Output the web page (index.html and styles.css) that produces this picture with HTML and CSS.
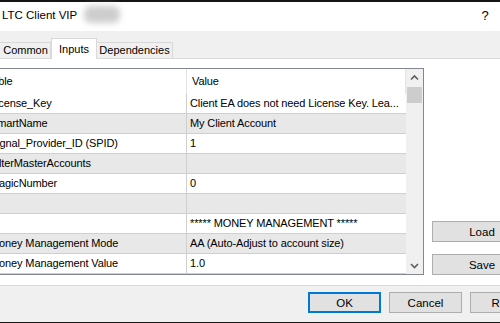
FILE: index.html
```html
<!DOCTYPE html>
<html>
<head>
<meta charset="utf-8">
<title>LTC Client VIP</title>
<link rel="stylesheet" href="styles.css">
</head>
<body>
<div class="topline"></div>
<header class="titlebar">
  <span class="title">LTC Client VIP</span>
  <span class="blurred"></span>
  <span class="spacer"></span>
  <span class="help">?</span>
  <span class="close"></span>
</header>
<main class="dialog">
  <nav class="tabs">
    <div class="tab tab-common">Common</div>
    <div class="tab tab-inputs active">Inputs</div>
    <div class="tab tab-deps">Dependencies</div>
  </nav>
  <section class="panel">
    <div class="grid">
      <div class="list">
        <div class="row head">
          <div class="cell name">Variable</div>
          <div class="cell value">Value</div>
        </div>
        <div class="row"><div class="cell name">License_Key</div><div class="cell value">Client EA does not need License Key. Lea...</div></div>
        <div class="row alt"><div class="cell name">SmartName</div><div class="cell value">My Client Account</div></div>
        <div class="row"><div class="cell name">Signal_Provider_ID (SPID)</div><div class="cell value">1</div></div>
        <div class="row alt"><div class="cell name">FilterMasterAccounts</div><div class="cell value"></div></div>
        <div class="row"><div class="cell name">MagicNumber</div><div class="cell value">0</div></div>
        <div class="row alt"><div class="cell name"></div><div class="cell value"></div></div>
        <div class="row"><div class="cell name"></div><div class="cell value">***** MONEY MANAGEMENT *****</div></div>
        <div class="row alt"><div class="cell name">Money Management Mode</div><div class="cell value">AA (Auto-Adjust to account size)</div></div>
        <div class="row"><div class="cell name">Money Management Value</div><div class="cell value">1.0</div></div>
      </div>
      <div class="scroll">
        <div class="arrow">
          <svg width="17" height="17" viewBox="0 0 17 17"><polyline points="5,10.5 8.5,7 12,10.5" fill="none" stroke="#606060" stroke-width="1.7"/></svg>
        </div>
        <div class="thumb"></div>
        <div class="track"></div>
        <div class="arrow">
          <svg width="17" height="17" viewBox="0 0 17 17"><polyline points="5,7 8.5,10.5 12,7" fill="none" stroke="#606060" stroke-width="1.7"/></svg>
        </div>
      </div>
    </div>
    <div class="side">
      <button class="btn wide">Load</button>
      <button class="btn wide">Save</button>
    </div>
  </section>
  <footer class="footer">
    <button class="btn primary">OK</button>
    <button class="btn">Cancel</button>
    <button class="btn">Reset</button>
  </footer>
</main>
<div class="bottomline"></div>
</body>
</html>
```

FILE: styles.css
```css
* { box-sizing: border-box; }
html, body { margin: 0; padding: 0; }
body {
  width: 500px;
  height: 323px;
  overflow: hidden;
  background: #f0f0f0;
  font-family: "Liberation Sans", Arial, sans-serif;
  font-size: 11px;
  color: #000;
}
.topline { height: 2px; background: #151515; }
.titlebar {
  width: 560px;
  height: 29px;
  background: #fff;
  display: flex;
  align-items: center;
  padding-right: 6px;
}
.title { padding-left: 2px; font-size: 11.5px; margin-top: -3px; }
.blurred {
  width: 36px;
  height: 17px;
  margin-left: 7px;
  margin-top: -4px;
  background: #cdcdcd;
  border-radius: 7px;
  filter: blur(3px);
}
.spacer { flex: 1; }
.help, .close { width: 46px; text-align: center; font-size: 13px; margin-top: -3px; }
.dialog { width: 560px; }
.tabs {
  height: 27px;
  display: flex;
  align-items: flex-end;
  margin-left: -2px;
  position: relative;
  z-index: 1;
}
.tab {
  height: 16px;
  border: 1px solid #d9d9d9;
  border-bottom: none;
  line-height: 15px;
  text-align: center;
  background: #f0f0f0;
}
.tab-common { width: 53px; padding-left: 2px; }
.tab-inputs { width: 46px; }
.tab-deps { width: 77px; margin-left: -1px; }
.tab.active {
  height: 21px;
  margin-bottom: -1px;
  background: #fff;
  padding-top: 1px;
  line-height: 18px;
}
.panel {
  height: 228px;
  background: #fff;
  border-top: 1px solid #d9d9d9;
  border-bottom: 1px solid #d9d9d9;
  padding: 9px 0 10px 0;
  display: flex;
}
.grid {
  width: 464px;
  height: 207px;
  margin-left: -40px;
  border: 1px solid #828790;
  display: flex;
}
.list { width: 445px; }
.row {
  display: grid;
  grid-template-columns: 226px 219px;
  height: 20px;
  background: #fff;
}
.row.alt { background: #e8e8e8; }
.cell {
  border-bottom: 1px solid #cfcfcf;
  line-height: 19px;
  white-space: nowrap;
  overflow: hidden;
  letter-spacing: -0.12px;
}
.cell.name { padding-left: 29px; border-right: 1px solid #cfcfcf; }
.cell.value { padding-left: 3px; }
.row.head { height: 25px; }
.row.head .cell { border-bottom: none; line-height: 25px; }
.row.head .name { padding-left: 13px; border-right-color: #e3e3e3; }
.row.head .value { padding-left: 5px; border-right: 1px solid #e3e3e3; }
.scroll {
  width: 17px;
  background: #f0f0f0;
  display: flex;
  flex-direction: column;
}
.arrow { height: 17px; }
.arrow svg { display: block; }
.thumb { height: 16px; margin: 1px 1px 0 1px; background: #cdcdcd; }
.track { flex: 1; }
.side {
  margin-left: 8px;
  display: flex;
  flex-direction: column;
  justify-content: flex-end;
  gap: 12px;
}
.btn {
  width: 73px;
  height: 21px;
  background: #e1e1e1;
  border: 1px solid #adadad;
  font-family: "Liberation Sans", Arial, sans-serif;
  font-size: 11.5px;
  color: #000;
  padding: 0;
}
.btn.wide { width: 100px; }
.btn.primary { border: 2px solid #0078d7; }
.footer {
  height: 36px;
  padding: 6px 17px 0 0;
  display: flex;
  justify-content: flex-end;
  align-items: flex-start;
  gap: 8px;
}
.bottomline { height: 1px; background: #151515; }
```
